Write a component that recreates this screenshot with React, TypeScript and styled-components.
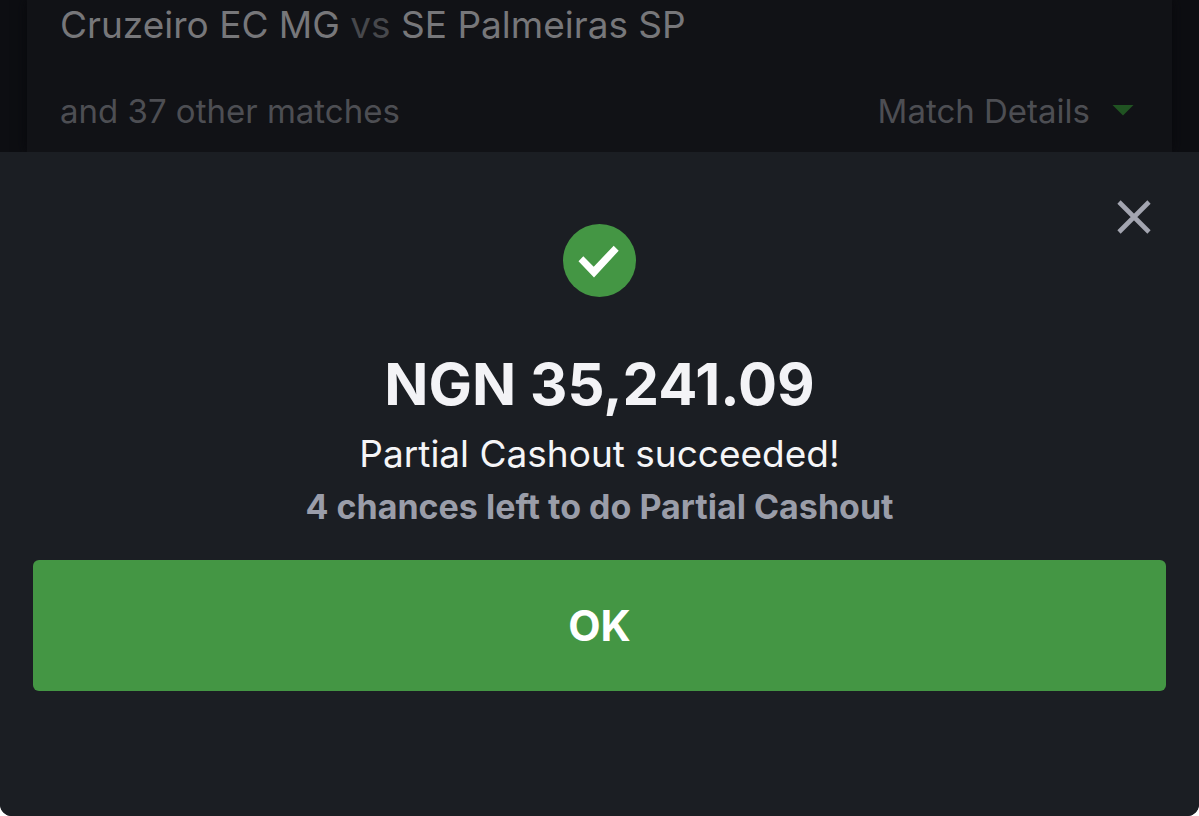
import React from "react";
import styled, { createGlobalStyle } from "styled-components";

const GlobalStyle = createGlobalStyle`
  * { box-sizing: border-box; }
  body { margin: 0; background: #ffffff; font-family: Inter, "Liberation Sans", sans-serif; }
  h1, p { margin: 0; }
  button { font-family: inherit; border: 0; cursor: pointer; }
`;

const Screen = styled.main`
  min-height: 100vh;
  display: flex;
  flex-direction: column;
  overflow: hidden;
  background: #0d0e12;
  border-radius: 0 0 12px 12px;
`;

const MatchCard = styled.section`
  margin: 0 27px;
  padding: 0 33px 21px;
  background: #111216;
  box-shadow: 0 0 12px #08080c;
  color: #4d4e53;
`;

const Teams = styled.p`
  font-size: 37px;
  line-height: 50px;
  color: #77777a;
`;

const Versus = styled.span`
  color: #47484c;
`;

const MatchFooter = styled.div`
  display: flex;
  justify-content: space-between;
  align-items: center;
  margin-top: 41px;
  font-size: 33px;
  line-height: 40px;
`;

const DetailsButton = styled.button`
  display: flex;
  align-items: center;
  gap: 22px;
  padding: 0 5px 0 0;
  background: none;
  color: inherit;
  font-size: 33px;
  line-height: 40px;
`;

const Dialog = styled.section`
  flex: 1;
  display: flex;
  flex-direction: column;
  align-items: center;
  position: relative;
  padding: 72px 33px 120px;
  background: #1b1e23;
  text-align: center;
`;

const CloseButton = styled.button`
  position: absolute;
  top: 43px;
  right: 43px;
  padding: 4px;
  background: none;
  line-height: 0;
`;

const Amount = styled.h1`
  margin-top: 50px;
  font-size: 58px;
  line-height: 74px;
  font-weight: 700;
  color: #f3f3f6;
`;

const Message = styled.p`
  margin-top: 9px;
  font-size: 37px;
  line-height: 48px;
  color: #f5f5f7;
`;

const Chances = styled.p`
  margin-top: 9px;
  font-size: 34px;
  line-height: 40px;
  font-weight: 700;
  color: #9a9da9;
`;

const OkButton = styled.button`
  width: 100%;
  height: 131px;
  margin-top: 33px;
  border-radius: 6px;
  background: #449644;
  color: #ffffff;
  font-size: 42px;
  font-weight: 700;
`;

export default function App() {
  return (
    <>
      <GlobalStyle />
      <Screen>
        <MatchCard>
          <Teams>Cruzeiro EC MG <Versus>vs</Versus> SE Palmeiras SP</Teams>
          <MatchFooter>
            <span>and 37 other matches</span>
            <DetailsButton type="button">
              Match Details
              <svg width="22" height="12" viewBox="0 0 22 12" aria-hidden="true">
                <path d="M0.5 0H21.5L11 10.5Z" fill="#205322" />
              </svg>
            </DetailsButton>
          </MatchFooter>
        </MatchCard>
        <Dialog role="dialog" aria-labelledby="amount">
          <CloseButton type="button" aria-label="Close">
            <svg width="36" height="36" viewBox="0 0 36 36" fill="none" aria-hidden="true">
              <path d="M3 3L33 33M33 3L3 33" stroke="#a3a5b0" strokeWidth="4.6" />
            </svg>
          </CloseButton>
          <svg width="73" height="73" viewBox="0 0 73 73" aria-hidden="true">
            <circle cx="36.5" cy="36.5" r="36.5" fill="#449644" />
            <path d="M15.5 37.2L20.3 32.2L30.7 42.7L50.7 21.7L55.7 26.7L31 53.5Z" fill="#ffffff" />
          </svg>
          <Amount id="amount">NGN 35,241.09</Amount>
          <Message>Partial Cashout succeeded!</Message>
          <Chances>4 chances left to do Partial Cashout</Chances>
          <OkButton type="button">OK</OkButton>
        </Dialog>
      </Screen>
    </>
  );
}
